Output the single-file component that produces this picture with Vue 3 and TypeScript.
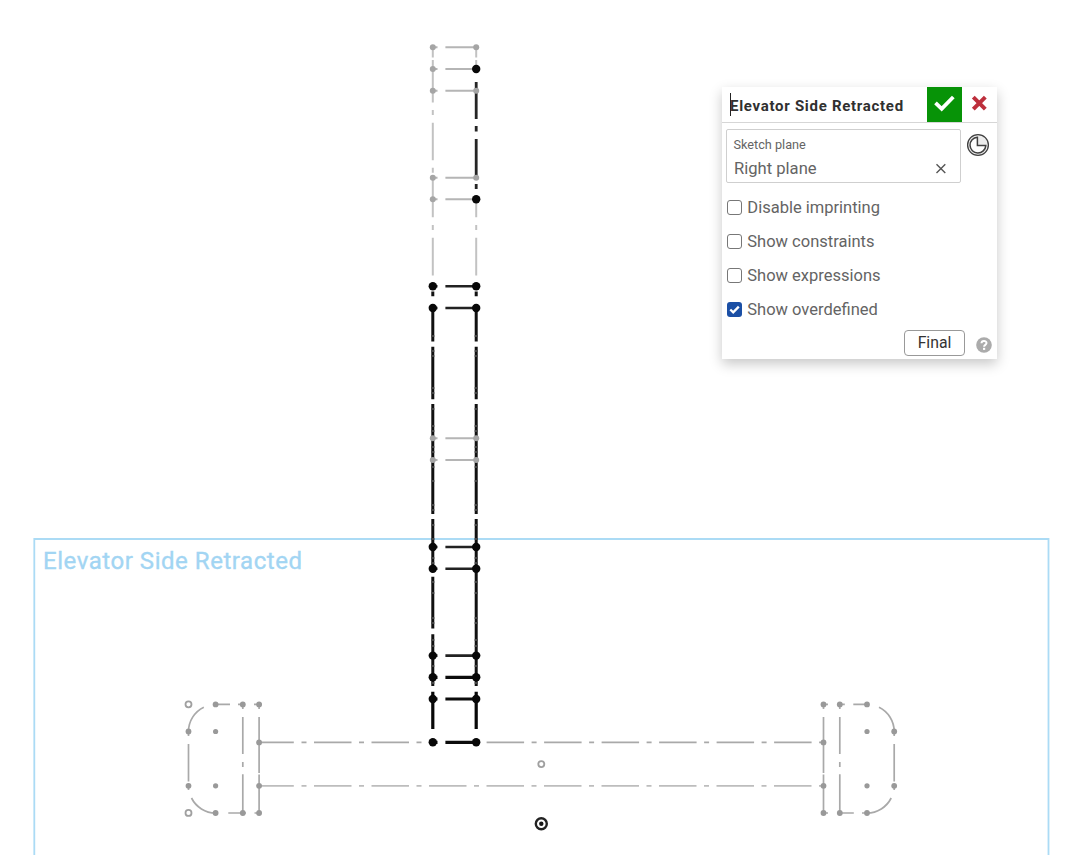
<script setup lang="ts">
import { ref } from 'vue'

interface Option { label: string; on: boolean }
interface Dot { x: number; y: number }

const options = ref<Option[]>([
  { label: 'Disable imprinting', on: false },
  { label: 'Show constraints', on: false },
  { label: 'Show expressions', on: false },
  { label: 'Show overdefined', on: true },
])

const L = 432.8
const R = 476.2

const pale = [47.3, 69, 90.7, 177.7, 199.3]
const over = [438.3, 460]
const dark = [286.3, 308, 547, 568.7, 655.6, 677.3, 699, 742.3]
const bold = [677.3, 699, 742.3]

const at = (x: number, ys: number[]): Dot[] => ys.map((y) => ({ x, y }))

const paleDots: Dot[] = [...at(L, pale), ...at(R, [47.3, 90.7, 177.7])]
const darkDots: Dot[] = [...at(L, dark), ...at(R, [69, 199.3, ...dark])]
const overDots: Dot[] = [...at(L, over), ...at(R, over)]
const bumperDots: Dot[] = [
  ...at(188.5, [731.5, 785.8]),
  ...at(215.6, [704.4, 813]),
  ...at(242.8, [704.4, 813]),
  ...at(259.1, [704.4, 742.4, 785.8, 813]),
  ...at(823.5, [704.4, 742.4, 785.8, 813]),
  ...at(839.8, [704.4, 813]),
  ...at(867, [704.4, 813]),
  ...at(894.2, [731.5, 785.8]),
]
const centers: Dot[] = [...at(215.6, [731.5, 785.8]), ...at(867, [731.5, 785.8])]

const seg = (x: number, parts: number[][]): string =>
  parts.map(([a, b]) => `M${x} ${a}V${b}`).join('')

const paleTop = seg(L, [[47, 57.5], [60, 102.5], [110, 115], [122.7, 160.3], [167.7, 172.7], [175, 217.3], [225, 230], [237.7, 275.5]])
  + seg(R, [[47, 57.5], [60, 66], [199, 217.3], [225, 230], [237.7, 275.5]])
const carriage = seg(R, [[82, 119], [126, 131.5], [139, 178], [184, 189]])
const mastParts = [[291.5, 296.3], [308, 341.5], [346.7, 399.2], [404, 514], [519, 571]]
const mast = seg(L, [...mastParts, [576.8, 628.6], [634.3, 686]]) + seg(R, [...mastParts, [568, 686]])
const notches = [335, 350, 355, 387, 392, 408, 425, 430, 446, 451, 466, 480, 504, 509, 524, 538, 557, 562]
const notchPath = [...notches, 581, 592, 617, 622, 639, 645, 665, 682].map((y) => `M${L} ${y}v2M${R} ${y}v2`).join('')
const foot = seg(L, [[691.7, 729]]) + seg(R, [[691.7, 729]])
const bumperV = seg(188.5, [[731, 736], [744, 781.5], [786, 790]])
  + seg(242.8, [[704, 709], [717, 754], [762, 767], [774.3, 813]])
  + seg(259.1, [[704, 709], [717, 773], [774.6, 813]])
  + seg(823.5, [[704, 709], [717, 773], [774.6, 813]])
  + seg(839.8, [[704, 709], [717, 754], [762, 767], [774.3, 813]])
  + seg(894.2, [[731, 736], [744, 781.5], [786, 790]])
</script>

<template>
  <main class="workspace">
    <svg class="canvas" width="1087" height="855" viewBox="0 0 1087 855">
      <path class="frame" d="M34.3 856V539H1048.5V856" />
      <text class="frame-name" x="43" y="569" textLength="259">Elevator Side Retracted</text>

      <g class="thin">
        <path d="M259 742.4H293.8M301.5 742.4h5" />
        <path d="M259 785.8H293.8M301.5 785.8h5" class="faint" />
        <path d="M314 742.4H434" stroke-dasharray="37.5 7.5 5 7.5" />
        <path d="M486.6 742.4H823" stroke-dasharray="37.5 7.5 5 7.5" />
        <path class="faint" d="M314 785.8H823" stroke-dasharray="37.5 7.5 5 7.5" />
        <path :d="bumperV" />
        <path d="M215.6 704.4H230M238 704.4h5M254 704.4h8M228.3 813H246M254.5 813h5M823.5 704.4h4.5M839.8 704.4h5M853.3 704.4H867M823.5 813h4.5M839.8 813h14M862 813h5" />
        <path d="M188.5 731.5A27.1 27.1 0 0 1 203.8 707.2M191.5 798A27.1 27.1 0 0 0 215.6 813M879 707.2A27.1 27.1 0 0 1 894.2 731.5M867 813A27.1 27.1 0 0 0 891.2 798" />
      </g>
      <circle v-for="(d, i) in bumperDots" :key="'b' + i" class="grey-dot" :cx="d.x" :cy="d.y" r="2.9" />
      <circle v-for="(d, i) in centers" :key="'c' + i" class="grey-dot" :cx="d.x" :cy="d.y" r="2.6" />
      <circle class="ring" cx="188.5" cy="704.3" r="3" />
      <circle class="ring" cx="188.5" cy="812.9" r="3" />
      <circle class="ring" cx="541.3" cy="764.1" r="3" />

      <path class="pale" :d="paleTop" />
      <path v-for="y in pale" :key="y" class="pale rung" :d="`M433 ${y}h4.5M445.4 ${y}H476`" />
      <path class="carriage" :d="carriage" />
      <path class="mast" :d="mast" />
      <path class="notch" :d="notchPath" />
      <path class="foot" :d="foot" />
      <path
        v-for="y in dark" :key="y" class="dark-rung" :class="{ heavy: bold.includes(y) }"
        :d="`M433 ${y}h4.5M445.4 ${y}H476`"
      />
      <path v-for="y in over" :key="y" class="pale rung" :d="`M433 ${y}h4.5M445.4 ${y}H476`" />
      <circle v-for="(d, i) in darkDots" :key="'d' + i" class="dark-dot" :cx="d.x" :cy="d.y" r="4.2" />
      <circle v-for="(d, i) in [...paleDots, ...overDots]" :key="'p' + i" class="pale-dot" :cx="d.x" :cy="d.y" r="3" />

      <circle class="origin" cx="541.3" cy="823.8" r="5.5" />
      <circle cx="541.3" cy="823.8" r="2.2" fill="#161616" />
    </svg>

    <section class="dialog">
      <header class="head">
        <span class="caret"></span>
        <span class="title">Elevator Side Retracted</span>
        <button class="accept" aria-label="Accept">
          <svg width="35" height="35" viewBox="0 0 35 35"><path d="M8.5 15.8 14.7 21.8 26.3 10" fill="none" stroke="#fff" stroke-width="3.8" /></svg>
        </button>
        <button class="cancel" aria-label="Cancel">
          <svg width="35" height="35" viewBox="0 0 35 35"><path d="M11.3 10.2 23.3 22.2M23.3 10.2 11.3 22.2" fill="none" stroke="#bd2f3c" stroke-width="4" /></svg>
        </button>
      </header>

      <div class="plane-row">
        <div class="plane">
          <span class="plane-label">Sketch plane</span>
          <div class="plane-value">
            <span>Right plane</span>
            <svg width="12" height="12" viewBox="0 0 12 12"><path d="M1.5 2.3 10.3 11.1M10.3 2.3 1.5 11.1" fill="none" stroke="#555" stroke-width="1.4" /></svg>
          </div>
        </div>
        <svg class="clock" width="24" height="24" viewBox="0 0 24 24" fill="none" stroke="#404040">
          <circle cx="12" cy="12" r="10.4" stroke-width="1.3" fill="#ececec" />
          <path d="M11.4 4.2A7.9 7.9 0 1 0 19.8 12.6H11.4Z" stroke-width="1.5" fill="#fff" />
        </svg>
      </div>

      <ul class="options">
        <li v-for="o in options" :key="o.label" @click="o.on = !o.on">
          <span class="box" :class="{ on: o.on }">
            <svg v-if="o.on" width="15" height="15" viewBox="0 0 15 15"><path d="M3.3 7.5 6.2 10.3 11.8 4.6" fill="none" stroke="#fff" stroke-width="2.3" /></svg>
          </span>
          <span>{{ o.label }}</span>
        </li>
      </ul>

      <footer class="foot-row">
        <button class="final">Final</button>
        <svg class="help" width="16" height="16" viewBox="0 0 16 16">
          <circle cx="8" cy="8" r="7.8" fill="#ababab" />
          <path d="M5.5 6.3C5.5 3.2 10.5 3.2 10.5 6.1 10.5 7.8 8.1 7.9 8.1 9.7" fill="none" stroke="#fff" stroke-width="2" />
          <rect x="7" y="10.8" width="2.2" height="2.1" fill="#fff" />
        </svg>
      </footer>
    </section>
  </main>
</template>

<style>
body { margin: 0; background: #fff; overflow: hidden; }
</style>

<style scoped>
.workspace { position: relative; width: 1087px; height: 855px; overflow: hidden; background: #fff; font-family: Roboto, "Liberation Sans", sans-serif; }
.canvas { display: block; }
.canvas path { fill: none; }
.frame { stroke: #abdbf5; stroke-width: 1.8; }
.frame-name { font: 400 24px Roboto, sans-serif; fill: #a2d5f3; stroke: #a2d5f3; stroke-width: .35; }
.thin { stroke: #a9a9a9; stroke-width: 1.7; }
.faint { stroke: #bdbdbd; }
.grey-dot { fill: #999; }
.ring { fill: #fff; stroke: #a0a0a0; stroke-width: 1.8; }
.pale { stroke: #c2c2c2; stroke-width: 2; }
.pale.rung { stroke: #b5b5b5; stroke-width: 2.1; }
.pale-dot { fill: #a5a5a5; }
.carriage { stroke: #252525; stroke-width: 2.8; }
.mast { stroke: #111; stroke-width: 3; }
.notch { stroke: #444; stroke-width: 3; }
.foot { stroke: #080808; stroke-width: 3.2; }
.dark-rung { stroke: #222; stroke-width: 2.6; }
.dark-rung.heavy { stroke: #0c0c0c; stroke-width: 3.2; }
.dark-dot { fill: #080808; }
.origin { fill: #fff; stroke: #222; stroke-width: 2.4; }

.dialog { position: absolute; left: 722px; top: 87px; width: 275px; height: 272px; background: #fff; box-shadow: 0 5px 12px rgba(0, 0, 0, .22); display: flex; flex-direction: column; color: #646464; }
button { font: inherit; padding: 0; border: 0; background: none; }
button svg { display: block; }
.head { display: flex; height: 35px; border-bottom: 1px solid #d6d6d6; align-items: center; }
.caret { width: 1px; height: 23px; margin-left: 8px; background: #222; }
.title { flex: 1; margin-left: -1px; padding-top: 2px; font: 700 15px/20px Roboto, sans-serif; letter-spacing: .71px; color: #303030; white-space: nowrap; }
.accept { width: 35px; height: 35px; background: #079307; }
.cancel { width: 35px; height: 35px; }
.plane-row { display: flex; gap: 5px; padding: 6px 0 0 4px; align-items: flex-start; }
.plane { box-sizing: border-box; width: 235px; height: 54px; border: 1px solid #cfcfcf; border-radius: 2px; padding: 6px 13px 0 6.5px; }
.plane-label { display: block; font-size: 12.7px; line-height: 17px; }
.plane-value { display: flex; justify-content: space-between; align-items: center; height: 30px; padding-left: .5px; font-size: 16.6px; }
.clock { margin-top: 4px; }
.options { list-style: none; margin: 7px 0 0; padding: 0 0 0 5px; }
.options li { display: flex; align-items: center; gap: 5.3px; height: 34.1px; font-size: 16.5px; white-space: nowrap; }
.box { box-sizing: border-box; width: 15px; height: 15px; border: 1px solid #777; border-radius: 3px; }
.box svg { display: block; }
.box.on { border: 0; background: #1b4fa5; }
.foot-row { display: flex; align-items: flex-start; padding: 3.4px 5px 0 0; justify-content: flex-end; gap: 11px; }
.final { box-sizing: border-box; width: 61px; height: 26px; border: 1px solid #999; border-radius: 4px; font-size: 15.8px; color: #333; }
.help { margin-top: 7px; }
</style>
